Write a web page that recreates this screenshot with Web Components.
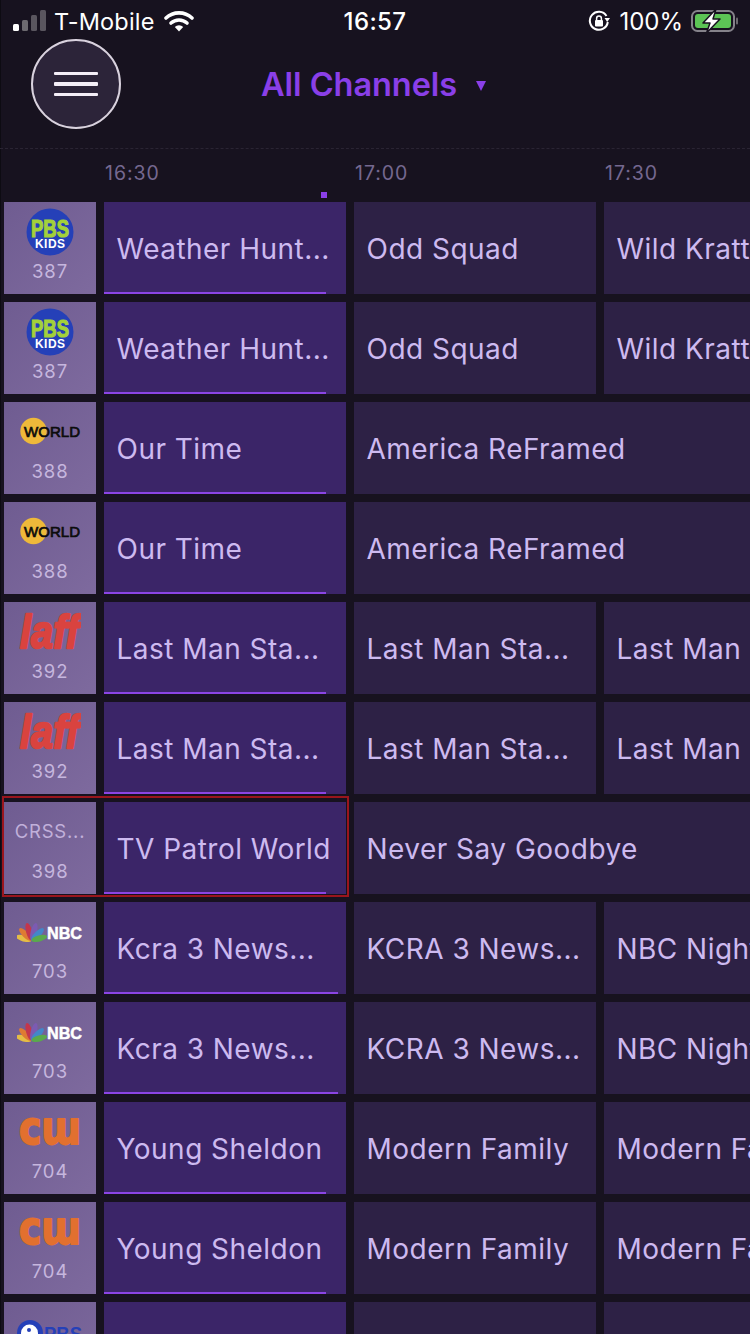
<!DOCTYPE html>
<html>
<head>
<meta charset="utf-8">
<title>All Channels</title>
<style>
  html, body { margin: 0; padding: 0; background: #17121f; }
  body { font-family: Inter, "Noto Sans", sans-serif; }
</style>
</head>
<body>
<guide-screen>
  <status-bar></status-bar>
  <guide-header title-text="All Channels"></guide-header>
  <time-ruler></time-ruler>

  <channel-row>
    <channel-cell number="387"><pbs-kids-logo></pbs-kids-logo></channel-cell>
    <program-cell live progress="222">Weather Hunt...</program-cell>
    <program-cell>Odd Squad</program-cell>
    <program-cell>Wild Kratts</program-cell>
  </channel-row>
  <channel-row>
    <channel-cell number="387"><pbs-kids-logo></pbs-kids-logo></channel-cell>
    <program-cell live progress="222">Weather Hunt...</program-cell>
    <program-cell>Odd Squad</program-cell>
    <program-cell>Wild Kratts</program-cell>
  </channel-row>
  <channel-row>
    <channel-cell number="388"><world-logo></world-logo></channel-cell>
    <program-cell live progress="222">Our Time</program-cell>
    <program-cell wide>America ReFramed</program-cell>
  </channel-row>
  <channel-row>
    <channel-cell number="388"><world-logo></world-logo></channel-cell>
    <program-cell live progress="222">Our Time</program-cell>
    <program-cell wide>America ReFramed</program-cell>
  </channel-row>
  <channel-row>
    <channel-cell number="392"><laff-logo></laff-logo></channel-cell>
    <program-cell live progress="222">Last Man Sta...</program-cell>
    <program-cell>Last Man Sta...</program-cell>
    <program-cell>Last Man</program-cell>
  </channel-row>
  <channel-row>
    <channel-cell number="392"><laff-logo></laff-logo></channel-cell>
    <program-cell live progress="222">Last Man Sta...</program-cell>
    <program-cell>Last Man Sta...</program-cell>
    <program-cell>Last Man</program-cell>
  </channel-row>
  <channel-row selected>
    <channel-cell number="398"><span class="plain">CRSS...</span></channel-cell>
    <program-cell live progress="222">TV Patrol World</program-cell>
    <program-cell wide>Never Say Goodbye</program-cell>
  </channel-row>
  <channel-row>
    <channel-cell number="703"><nbc-logo></nbc-logo></channel-cell>
    <program-cell live progress="234">Kcra 3 News...</program-cell>
    <program-cell>KCRA 3 News...</program-cell>
    <program-cell>NBC Nightly News</program-cell>
  </channel-row>
  <channel-row>
    <channel-cell number="703"><nbc-logo></nbc-logo></channel-cell>
    <program-cell live progress="234">Kcra 3 News...</program-cell>
    <program-cell>KCRA 3 News...</program-cell>
    <program-cell>NBC Nightly News</program-cell>
  </channel-row>
  <channel-row>
    <channel-cell number="704"><cw-logo></cw-logo></channel-cell>
    <program-cell live progress="222">Young Sheldon</program-cell>
    <program-cell>Modern Family</program-cell>
    <program-cell>Modern Family</program-cell>
  </channel-row>
  <channel-row>
    <channel-cell number="704"><cw-logo></cw-logo></channel-cell>
    <program-cell live progress="222">Young Sheldon</program-cell>
    <program-cell>Modern Family</program-cell>
    <program-cell>Modern Family</program-cell>
  </channel-row>
  <channel-row>
    <channel-cell><pbs-logo></pbs-logo></channel-cell>
    <program-cell live></program-cell>
    <program-cell></program-cell>
    <program-cell></program-cell>
  </channel-row>
</guide-screen>

<script>
  // Small helper so every element gets an open shadow root from a string
  function define(name, html, extra) {
    class El extends HTMLElement {
      constructor() {
        super();
        this.attachShadow({ mode: 'open' });
        this.shadowRoot.innerHTML = html;
      }
      connectedCallback() {
        if (extra) extra(this, this.shadowRoot);
      }
    }
    customElements.define(name, El);
  }

  define('guide-screen', `
    <style>
      :host { display: block; width: 750px; height: 1334px; overflow: hidden; background: #17121f; box-shadow: inset 1px 0 0 #0d0b12; }
    </style>
    <slot></slot>
  `);

  define('status-bar', `
    <style>
      :host { display: grid; grid-template-columns: 1fr auto 1fr; align-items: center; height: 42px; margin-bottom: -2px; padding: 0 13px; color: #fff; font-size: 24px; box-sizing: border-box; }
      .left, .right { display: flex; align-items: center; }
      .left { gap: 7px; }
      .right { justify-content: flex-end; gap: 9px; margin-right: -4px; }
      .right span { margin-right: -1px; }
      .time { font-weight: 500; letter-spacing: .4px; }
      .carrier { font-size: 23.5px; letter-spacing: .2px; }
      svg { display: block; }
    </style>
    <div class="left">
      <svg width="34" height="22" viewBox="0 0 34 22">
        <rect x="0" y="14" width="6" height="7" rx="1.5" fill="#fff"/>
        <rect x="9" y="10" width="6" height="11" rx="1.5" fill="#6d6a70"/>
        <rect x="18" y="5" width="6" height="16" rx="1.5" fill="#5a565f"/>
        <rect x="27" y="0" width="6" height="21" rx="1.5" fill="#5a565f"/>
      </svg>
      <span class="carrier">T-Mobile</span>
      <svg width="30" height="22" viewBox="0 0 30 22" style="margin-left:2px">
        <path d="M2 8 A19 19 0 0 1 28 8" fill="none" stroke="#fff" stroke-width="3.6" stroke-linecap="round"/>
        <path d="M7 13 A12 12 0 0 1 23 13" fill="none" stroke="#fff" stroke-width="3.6" stroke-linecap="round"/>
        <path d="M15 21.5 L10.8 17 A6 6 0 0 1 19.2 17 Z" fill="#fff"/>
      </svg>
    </div>
    <div class="time">16:57</div>
    <div class="right">
      <svg width="22" height="22" viewBox="0 0 22 22">
        <path d="M18.5 6 A9 9 0 1 0 19.8 12" fill="none" stroke="#fff" stroke-width="2"/>
        <path d="M16.5 8 L22 8 L19.2 12 Z" fill="#fff"/>
        <rect x="7" y="10" width="8" height="6.5" rx="1" fill="#fff"/>
        <path d="M8.6 10 V8.4 a2.4 2.4 0 0 1 4.8 0 V10" fill="none" stroke="#fff" stroke-width="1.5"/>
      </svg>
      <span>100%</span>
      <svg width="50" height="24" viewBox="0 0 50 24">
        <rect x="1" y="2" width="42" height="20" rx="5.5" fill="none" stroke="#85828a" stroke-width="2"/>
        <rect x="4" y="5" width="36" height="14" rx="3" fill="#5cc455"/>
        <rect x="45" y="8.5" width="2" height="7" rx="1" fill="#6d6a70"/>
        <path d="M25 0 L12 14 L19 14 L15.5 24 L29 10 L22 10 Z" fill="#fff" stroke="#17121f" stroke-width="1.5" stroke-linejoin="round"/>
      </svg>
    </div>
  `);

  define('guide-header', `
    <style>
      :host { display: flex; align-items: flex-start; height: 108px; padding-left: 31px; box-sizing: border-box; }
      .menu { width: 90px; height: 90px; box-sizing: border-box; border: 2px solid #d9d2de; border-radius: 50%; background: #2c2439; display: flex; flex-direction: column; align-items: center; justify-content: center; gap: 7px; margin-top: -1px; flex: none; }
      .menu i { display: block; width: 44px; height: 3.5px; border-radius: 1px; background: #f4eef7; }
      .title { margin-left: 140px; height: 90px; color: #8a3fe8; font-size: 32.5px; font-weight: 600; display: flex; align-items: center; gap: 19px; margin-top: -1px; letter-spacing: -.05px; }
      .caret { width: 0; height: 0; border-left: 5.5px solid transparent; border-right: 5.5px solid transparent; border-top: 10px solid #8a3fe8; margin-top: 4px; }
    </style>
    <div class="menu"><i></i><i></i><i></i></div>
    <div class="title"><span id="t"></span><span class="caret"></span></div>
  `, (el, root) => {
    root.getElementById('t').textContent = el.getAttribute('title-text');
  });

  define('time-ruler', `
    <style>
      :host { display: flex; position: relative; height: 54px; padding-left: 105px; box-sizing: border-box; border-top: 1px dashed #2a2433; color: #756890; font-size: 19.5px; letter-spacing: .95px; }
      span { width: 250px; flex: none; padding-top: 12px; }
      .tick { position: absolute; left: 321px; top: 43px; width: 6px; height: 6px; background: #8a3fe8; padding: 0; }
    </style>
    <span>16:30</span><span>17:00</span><span>17:30</span>
    <div class="tick"></div>
  `);

  define('channel-row', `
    <style>
      :host { display: flex; position: relative; gap: 8px; height: 92px; width: 750px; padding-left: 4px; margin-bottom: 8px; box-sizing: border-box; }
      .sel { display: none; position: absolute; left: 2px; top: -6px; width: 347px; height: 101px; box-sizing: border-box; border: 2px solid #9a151d; pointer-events: none; z-index: 2; }
      :host([selected]) .sel { display: block; }
    </style>
    <slot></slot>
    <div class="sel"></div>
  `);

  define('channel-cell', `
    <style>
      :host { display: flex; flex-direction: column; align-items: center; width: 92px; height: 92px; flex: none; background: linear-gradient(135deg, #6f5c91, #7e6a9e); color: #c6b6de; }
      .logo { height: 58px; width: 100%; display: flex; align-items: center; justify-content: center; overflow: hidden; }
      .num { font-size: 18.5px; letter-spacing: .9px; line-height: 22px; }
      ::slotted(.plain) { font-size: 18.5px; letter-spacing: .8px; color: #c1b0da; }
    </style>
    <div class="logo"><slot></slot></div>
    <div class="num" id="n"></div>
  `, (el, root) => {
    root.getElementById('n').textContent = el.getAttribute('number');
  });

  define('program-cell', `
    <style>
      :host { display: flex; position: relative; align-items: center; width: 242px; height: 92px; flex: none; box-sizing: border-box; padding: 2px 0 0 12.5px; background: #2d2145; color: #cdbaf0; font-size: 28px; letter-spacing: .47px; white-space: nowrap; overflow: hidden; }
      :host([live]) { background: #3b2568; }
      :host([wide]) { width: 500px; }
      .bar { display: none; position: absolute; left: 0; bottom: 0; height: 2px; background: #8b45e4; }
      :host([live]) .bar { display: block; }
    </style>
    <slot></slot>
    <div class="bar" id="b"></div>
  `, (el, root) => {
    root.getElementById('b').style.width = (el.getAttribute('progress') || 0) + 'px';
  });

  // Channel logos. Lettering stays as real svg text.
  define('pbs-kids-logo', `
    <style>:host { display: block; height: 48px; margin-top: 2px; } svg { display: block; }</style>
    <svg width="48" height="48" viewBox="0 0 48 48">
      <circle cx="24" cy="24" r="23.5" fill="#2540b8"/>
      <text x="24" y="28.5" text-anchor="middle" font-family="Liberation Sans" font-weight="700" font-size="24" fill="#a3d13a" stroke="#a3d13a" stroke-width="1.2" textLength="38" lengthAdjust="spacingAndGlyphs">PBS</text>
      <text x="24" y="39.5" text-anchor="middle" font-family="Liberation Sans" font-weight="700" font-size="12" fill="#fff" textLength="30" lengthAdjust="spacing">KIDS</text>
    </svg>
  `);

  define('world-logo', `
    <style>:host { display: block; height: 28px; } svg { display: block; }</style>
    <svg width="62" height="28" viewBox="0 0 62 28">
      <circle cx="14.5" cy="14" r="13.2" fill="#eeb93a"/>
      <text x="5" y="19.5" font-family="Liberation Sans" font-size="15.5" fill="#0c0c0c" stroke="#0c0c0c" stroke-width=".7" textLength="56" lengthAdjust="spacingAndGlyphs">WORLD</text>
    </svg>
  `);

  define('laff-logo', `
    <style>:host { display: block; height: 40px; } svg { display: block; }</style>
    <svg width="62" height="40" viewBox="0 0 62 40">
      <text x="1" y="37" font-family="Liberation Sans" font-style="italic" font-weight="700" font-size="47" fill="#d9433f" stroke="#d9433f" stroke-width="2.4" stroke-linejoin="round" textLength="59" lengthAdjust="spacingAndGlyphs">laff</text>
    </svg>
  `);

  define('nbc-logo', `
    <style>:host { display: block; height: 20px; margin-top: 2px; } svg { display: block; }</style>
    <svg width="66" height="20" viewBox="0 0 66 20">
      <g>
        <ellipse cx="14.5" cy="10.5" rx="3.1" ry="8" fill="#e5bd45" transform="rotate(-75 14.5 18.5)"/>
        <ellipse cx="14.5" cy="10" rx="3.1" ry="8.5" fill="#de7a33" transform="rotate(-45 14.5 18.5)"/>
        <ellipse cx="14.5" cy="9.5" rx="3.1" ry="9" fill="#c4364c" transform="rotate(-15 14.5 18.5)"/>
        <ellipse cx="14.5" cy="9.5" rx="3.1" ry="9" fill="#7b5bb2" transform="rotate(15 14.5 18.5)"/>
        <ellipse cx="14.5" cy="10" rx="3.1" ry="8.5" fill="#4287c9" transform="rotate(45 14.5 18.5)"/>
        <ellipse cx="14.5" cy="10.5" rx="3.1" ry="8" fill="#5aa94c" transform="rotate(75 14.5 18.5)"/>
      </g>
      <text x="30" y="16.5" font-family="Liberation Sans" font-weight="700" font-size="16.5" fill="#fff" stroke="#fff" stroke-width=".5" textLength="35" lengthAdjust="spacingAndGlyphs">NBC</text>
    </svg>
  `);

  // the turned m gives the rounded bottoms of the logo's w
  define('cw-logo', `
    <style>:host { display: block; height: 32px; } svg { display: block; }</style>
    <svg width="66" height="32" viewBox="0 0 66 32">
      <text x="2" y="29" font-family="DejaVu Sans" font-weight="700" font-size="47" fill="#e2702f" stroke="#e2702f" stroke-width="2" stroke-linejoin="round" textLength="62" lengthAdjust="spacingAndGlyphs">c\u026f</text>
    </svg>
  `);

  define('pbs-logo', `
    <style>:host { display: block; height: 40px; margin-top: 15px; } svg { display: block; }</style>
    <svg width="66" height="40" viewBox="0 0 66 40">
      <circle cx="13" cy="14" r="13" fill="#2540b8"/>
      <circle cx="12.5" cy="14" r="8.5" fill="#fff"/>
      <circle cx="12" cy="11" r="2" fill="#2540b8"/>
      <text x="27" y="22" font-family="Liberation Sans" font-weight="700" font-size="21" fill="#2540b8" textLength="38" lengthAdjust="spacingAndGlyphs">PBS</text>
    </svg>
  `);
</script>
</body>
</html>
